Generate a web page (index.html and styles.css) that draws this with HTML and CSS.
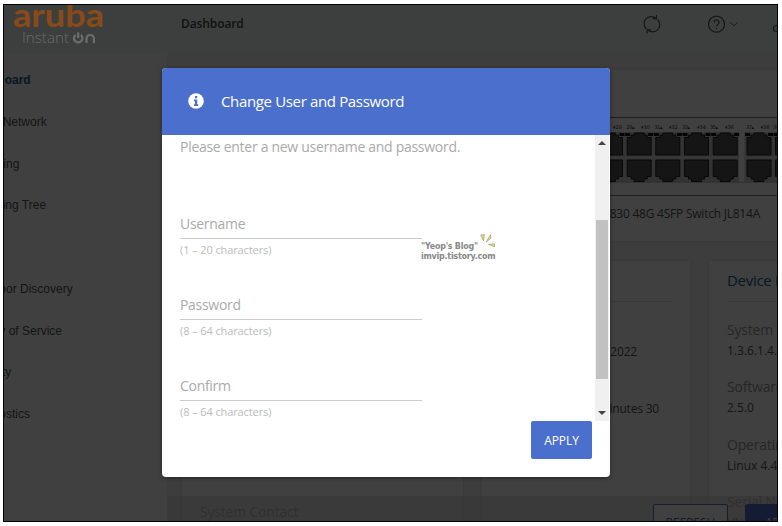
FILE: index.html
```
<!DOCTYPE html>
<html lang="en">
<head>
    <meta charset="UTF-8">
    <meta name="viewport" content="width=device-width, initial-scale=1.0">
    <title>Aruba Instant On - Dashboard</title>
    <link rel="stylesheet" href="styles.css">
</head>
<body>
    <div class="frame">
        <header class="topbar">
            <svg class="logo" width="92" height="46" viewBox="0 0 92 46">
                <text class="logo-name" x="0" y="21.500" textLength="91" lengthAdjust="spacingAndGlyphs">aruba</text>
                <text class="logo-sub" x="9" y="38" textLength="47" lengthAdjust="spacingAndGlyphs">Instant</text>
                <path class="logo-on" d="M62.600 29.800a4.200 4.200 0 1 0 5.200 0M65.200 27.500v5.500M73.500 38v-4.300a3.700 3.700 0 0 1 7.400 0v4.300"/>
            </svg>
            <h1>Dashboard</h1>
            <svg class="tools" width="137" height="24" viewBox="640 12 137 24">
                <path d="M646.300 29a7 7 0 0 1 9.700-10.500M657.500 19.500a7 7 0 0 1-9.700 10.500M652.800 18.700h3.600v-3.600M650.800 29.800h-3.600v3.600"/>
                <circle cx="716.500" cy="24.200" r="8"/>
                <path d="M714.200 22.400a2.400 2.400 0 1 1 3.700 2c-1 .6-1.400 1.200-1.400 2.200M716.500 28v1.100"/>
                <path class="chevron" d="M730.300 22.500l3.800 3.300 3.800-3.300"/>
                <circle cx="776.500" cy="28.500" r="3"/>
            </svg>
        </header>

        <div class="page">
            <nav class="sidebar">
                <a class="active">Dashboard</a>
                <a>Setup Network</a>
                <a>Switching</a>
                <a>Spanning Tree</a>
                <a></a>
                <a>Neighbor Discovery</a>
                <a>Quality of Service</a>
                <a>Security</a>
                <a>Diagnostics</a>
            </nav>
            <main class="content">
                <section class="card switch">
                    <svg width="596" height="79" viewBox="182 117 596 79">
                        <defs>
                            <g id="port">
                                <rect class="led" x="-1.500" y="0" width="5" height="3"/>
                                <rect class="led" x="21.500" y="0" width="5" height="3"/>
                                <path class="jack" d="M.5 4.500h4v-2.500h3v-2h10v2h3v2.500h4v17.500h-24z"/>
                            </g>
                            <g id="port-down">
                                <path class="jack" d="M.5 0h24v16.500h-4v2.500h-3v2.500h-10v-2.500h-3v-2.500h-4z"/>
                            </g>
                        </defs>
                        <path class="line" d="M182 117.500h596M182 195.500h596"/>
                        <path class="plate" d="M182 132h596v51h-596z"/>
                        <path class="seam" d="M182 157.500h557M745 157.500h33"/>
                        <path class="gap" d="M739 132h5.500v50h-5.500z"/>
                        <use href="#port" x="598" y="133"/>
                        <use href="#port" x="626.700" y="133"/>
                        <use href="#port" x="655.300" y="133"/>
                        <use href="#port" x="684" y="133"/>
                        <use href="#port" x="712.700" y="133"/>
                        <use href="#port" x="746.500" y="133"/>
                        <use href="#port" x="775" y="133"/>
                        <use href="#port-down" x="598" y="160"/>
                        <use href="#port-down" x="626.700" y="160"/>
                        <use href="#port-down" x="655.300" y="160"/>
                        <use href="#port-down" x="684" y="160"/>
                        <use href="#port-down" x="712.700" y="160"/>
                        <use href="#port-down" x="746.500" y="160"/>
                        <use href="#port-down" x="775" y="160"/>
                        <g class="port-no">
                            <text x="613" y="129" textLength="9">▾28</text>
                            <text x="626.500" y="129" textLength="8">29▴</text>
                            <text x="641" y="129" textLength="9">▾30</text>
                            <text x="654.500" y="129" textLength="8">31▴</text>
                            <text x="669" y="129" textLength="9">▾32</text>
                            <text x="682" y="129" textLength="8">33▴</text>
                            <text x="697" y="129" textLength="9">▾34</text>
                            <text x="710" y="129" textLength="8">35▴</text>
                            <text x="725" y="129" textLength="9">▾36</text>
                            <text x="746" y="129" textLength="8">37▴</text>
                            <text x="760.500" y="129" textLength="9">▾38</text>
                            <text x="773" y="129" textLength="8">39▴</text>
                        </g>
                    </svg>
                    <p>Aruba Instant On 1830 48G 4SFP Switch JL814A</p>
                </section>
                <div class="cards">
                    <section class="card contact">
                        <h3>System Contact</h3>
                    </section>
                    <section class="card time">
                        <hr>
                        <p class="date">2022</p>
                        <p class="uptime">minutes 30</p>
                    </section>
                    <section class="card device">
                        <h2>Device Information</h2>
                        <hr>
                        <dl>
                            <dt>System Object ID</dt>
                            <dd>1.3.6.1.4.1.11</dd>
                            <dt>Software Version</dt>
                            <dd>2.5.0</dd>
                            <dt>Operating System</dt>
                            <dd>Linux 4.4.120</dd>
                            <dt>Serial Number</dt>
                            <dd>VN</dd>
                        </dl>
                    </section>
                </div>
            </main>
        </div>

        <footer class="actions">
            <button class="refresh">REFRESH</button>
            <button class="primary">APPLY</button>
        </footer>

        <div class="overlay">
            <div class="modal">
                <div class="modal-header">
                    <svg width="16" height="16" viewBox="0 0 16 16">
                        <circle cx="8" cy="8" r="7.800" fill="#fff"/>
                        <path d="M7 3h2.200v2.200H7zM6 6.400h3.200v4.800h1V13H6v-1.800h1V8.200H6z" fill="#4b6fcc"/>
                    </svg>
                    <h2>Change User and Password</h2>
                </div>
                <div class="modal-body">
                    <form class="fields">
                        <p>Please enter a new username and password.</p>
                        <div class="field">
                            <label>Username</label>
                            <small>(1 – 20 characters)</small>
                        </div>
                        <div class="field">
                            <label>Password</label>
                            <small>(8 – 64 characters)</small>
                        </div>
                        <div class="field">
                            <label>Confirm</label>
                            <small>(8 – 64 characters)</small>
                        </div>
                    </form>
                    <div class="scrollbar">
                        <i class="up"></i>
                        <div class="thumb"></div>
                        <i class="down"></i>
                    </div>
                </div>
                <div class="modal-footer">
                    <button class="apply">APPLY</button>
                </div>
                <div class="watermark">
                    "Yeop's Blog"<br>imvip.tistory.com
                    <svg width="16" height="14" viewBox="0 0 16 14">
                        <path d="M.7 1l3.600-.4-.7 6.200zM10.300.8l.9 3.200-5 4zM8.500 10.400l6-.6v3z"/>
                    </svg>
                </div>
            </div>
        </div>
    </div>
</body>
</html>
```

FILE: styles.css
```
* { box-sizing: border-box; }
body { margin: 4px 0 0 3px; background-color: #fff; font-family: "Open Sans", "Noto Sans", sans-serif; overflow: hidden; }
h1, h2, h3, p, dl, dd { margin: 0; font-weight: normal; }
button { font-family: inherit; padding: 0; }

.frame {
    position: relative;
    display: flex;
    flex-direction: column;
    width: 775px;
    height: 518px;
    border: 1px solid #000;
    overflow: hidden;
    background-color: #f4f4f4;
}

.topbar { display: flex; flex: none; height: 48px; background-color: #f2faf7; }
/* the logo stays brighter than the dimmed page */
.logo { position: relative; z-index: 2; flex: none; margin-left: 9px; }
.logo-name { font: 700 33px Lato, sans-serif; fill: #8a4a18; }
.logo-sub { font: 300 15px "Open Sans", sans-serif; fill: #696b6a; }
.logo-on { fill: none; stroke: #6c6e6d; stroke-width: 2.2; }
.topbar h1 { margin-left: 76px; width: 459px; font-size: 12px; line-height: 37px; font-weight: 600; letter-spacing: -0.1px; color: #444; }
.tools { flex: none; margin-top: 7px; fill: none; stroke: #555; stroke-width: 1.2; }
.chevron { stroke-width: 0.9; }

.page { display: flex; flex: 1; min-height: 0; }
.sidebar {
    flex: none;
    width: 163px;
    padding-top: 7px;
    background-color: #fff;
    font-family: "Liberation Sans", Arial, sans-serif;
    font-size: 12px;
}
.sidebar a { display: block; height: 41.75px; line-height: 41px; margin-left: -36px; white-space: nowrap; color: #555; }
.sidebar .active { font-weight: bold; color: #1a5c8c; }

.content { flex: 1; min-width: 0; padding: 17px 0 0 15px; }
.card { flex: none; background-color: #fff; box-shadow: 0 0 4px rgba(0, 0, 0, 0.12); }
.switch { width: 610px; height: 171px; padding-top: 47px; overflow: hidden; }
.switch svg { display: block; }
.switch p { margin-left: 308px; width: 270px; text-align: right; font-size: 12px; line-height: 35px; letter-spacing: -0.23px; color: #555; white-space: nowrap; }
.line { stroke: #777; }
.plate { fill: #ccc; }
.seam { stroke: #fff; stroke-opacity: 0.5; }
.gap { fill: #fff; }
.jack { fill: #555; stroke: #222; stroke-width: 1; }
.led { fill: #111; }
.port-no text { font: 5px "DejaVu Sans", sans-serif; fill: #333; }

.cards { display: flex; gap: 19px; margin-top: 20px; }
.cards .card { height: 280px; }
.contact { width: 281px; padding: 239px 18px 0; }
.contact h3 { font-size: 14px; line-height: 24px; letter-spacing: -0.2px; color: #999; }
.time { width: 208px; padding: 40px 18px 0; text-align: right; }
.card hr { margin: 0; border: 0; border-top: 1px solid #ddd; }
.time p { font-size: 12px; line-height: 20px; letter-spacing: -0.2px; color: #555; }
.time .date { margin: 40px 35px 0 0; }
.time .uptime { margin: 37px 13px 0 0; }
.device { width: 250px; padding: 7px 18px 0; white-space: nowrap; }
.device h2 { height: 33px; font-size: 15px; line-height: 25px; letter-spacing: -0.3px; color: #1a5c8c; }
.device dl { padding-top: 16px; }
.device dt { font-size: 14px; line-height: 23px; letter-spacing: -0.2px; color: #999; }
.device dd { height: 34.300px; font-size: 12px; line-height: 20px; color: #555; }

.actions {
    position: absolute;
    left: 163px;
    right: 0;
    bottom: 0;
    height: 25px;
    display: flex;
    gap: 17px;
    padding: 8px 0 0 486px;
    background-color: rgba(215, 215, 215, 0.6);
}
.actions button { flex: none; width: 75px; height: 36px; font-size: 12px; border: 1px solid #4b6fcc; border-radius: 2px; }
.refresh { background-color: #fff; color: #4b6fcc; }
.primary { background-color: #4b6fcc; color: #fff; }

.overlay { position: absolute; inset: 0; padding: 63px 0 0 158px; background-color: rgba(0, 0, 0, 0.75); }
.modal {
    position: relative;
    width: 448px;
    height: 409px;
    border-radius: 4px;
    overflow: hidden;
    background-color: #fff;
    box-shadow: 0 1px 4px rgba(0, 0, 0, 0.4);
}
.modal-header { display: flex; align-items: center; gap: 17px; height: 67px; padding: 0 0 1px 26px; background-color: #4b6fcc; color: #fff; }
.modal-header h2 { font-size: 15px; letter-spacing: -0.35px; }

.modal-body { display: flex; height: 286px; overflow: hidden; }
.fields { flex: 1; padding-left: 18px; color: #aaa; }
.fields p { height: 76px; font-size: 14px; line-height: 24px; letter-spacing: -0.29px; }
.field { display: flex; flex-direction: column; height: 81px; width: 242px; }
.field label { height: 28px; border-bottom: 1px solid #ccc; font-size: 14px; line-height: 25px; letter-spacing: -0.3px; }
.field small { font-size: 11px; line-height: 21px; letter-spacing: -0.1px; color: #bbb; }

.scrollbar { display: flex; flex-direction: column; width: 14px; margin-right: 1px; padding: 6px 1px; background-color: #f0f0f0; }
.scrollbar i { margin: 0 auto; border: 4px solid transparent; }
.scrollbar .up { border-top: 0; border-bottom-color: #444; }
.scrollbar .down { border-bottom: 0; border-top-color: #444; margin-top: auto; }
.thumb { height: 159px; margin-top: 75px; background-color: #c1c1c1; }

.modal-footer { display: flex; justify-content: flex-end; padding-right: 18px; }
.apply { width: 61px; height: 38px; border: 0; border-radius: 2px; background-color: #4b6fcc; color: #fff; font-size: 12px; letter-spacing: -0.1px; }

.watermark {
    position: absolute;
    left: 259px;
    top: 174px;
    font: bold 8px/10px "DejaVu Sans", Verdana, sans-serif;
    letter-spacing: -0.25px;
    color: #888;
    white-space: nowrap;
}
.watermark svg { position: absolute; left: 59px; top: -8px; fill: #f4e04d; stroke: #888; stroke-width: 0.6; }
```
